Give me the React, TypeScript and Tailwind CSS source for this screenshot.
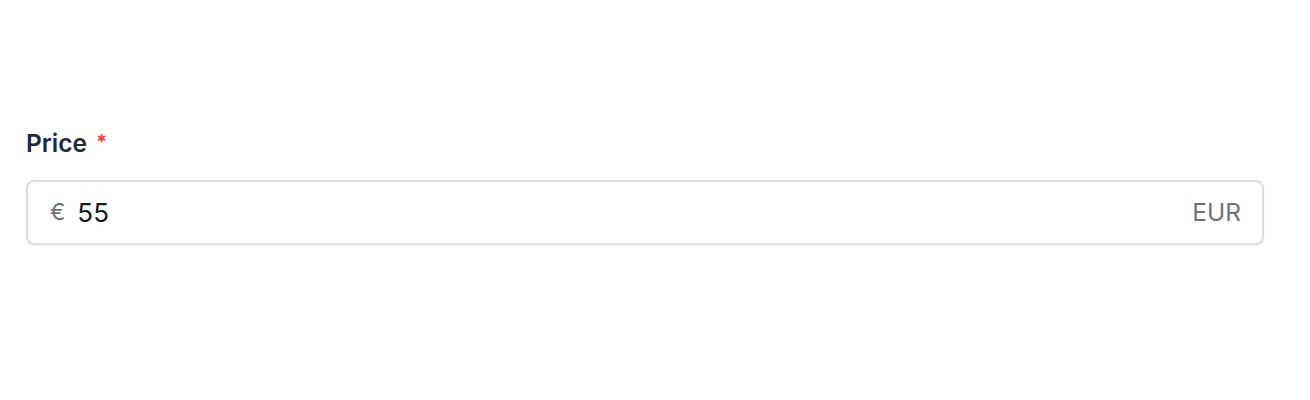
import React from "react";

export default function App() {
  return (
    <div className="w-[1310px] h-[400px] bg-white" style={{ fontFamily: "Inter, 'Noto Sans', sans-serif" }}>
      <div className="pt-[127px] pl-[26px] w-[1264px]">
        <label className="flex items-center text-[24.5px] leading-[32px] font-semibold text-[#1f2937]">
          Price
          <span className="ml-[9px] text-[20px] font-bold text-[#ef4444] leading-none relative -top-[1px]">*</span>
        </label>
        <div className="mt-[21px] h-[65px] flex items-center rounded-[8px] border-[2px] border-[#dcdde0] shadow-[0_1px_2px_rgba(0,0,0,0.05)] pl-[22px] pr-[21px]">
          <span className="text-[23px] text-[#6b7280]">€</span>
          <span className="ml-[12px] text-[26px] text-[#111827]">55</span>
          <span className="ml-auto text-[24.5px] text-[#6b7280]">EUR</span>
        </div>
      </div>
    </div>
  );
}
